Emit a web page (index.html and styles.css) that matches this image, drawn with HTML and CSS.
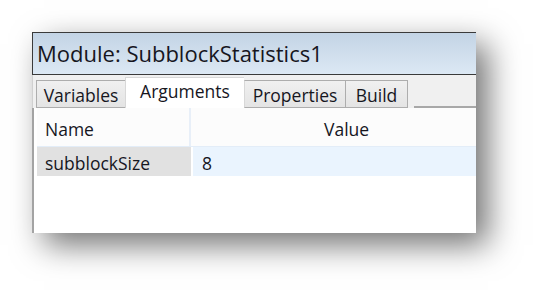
FILE: index.html
```html
<!DOCTYPE html>
<html lang="en">
<head>
    <meta charset="UTF-8">
    <title>Module</title>
    <link rel="stylesheet" href="styles.css">
</head>
<body>
    <div class="window">
        <div class="title">Module: SubblockStatistics1</div>
        <div class="tabs">
            <div class="tab t-vars">Variables</div>
            <div class="tab t-args active">Arguments</div>
            <div class="tab t-props">Properties</div>
            <div class="tab t-build">Build</div>
            <div class="tab-fill"></div>
        </div>
        <div class="grid">
            <div class="row head">
                <div class="cell name">Name</div>
                <div class="cell value">Value</div>
            </div>
            <div class="row data">
                <div class="cell name">subblockSize</div>
                <div class="cell value">8</div>
            </div>
        </div>
    </div>
</body>
</html>
```

FILE: styles.css
```css
*{
    margin: 0;
    padding: 0;
    box-sizing: border-box;
}
body{
    min-height: 298px;
    padding-top: 32px;
    background: #fff;
    font-family: "Open Sans", "Noto Sans", sans-serif;
    color: #16161e;
}
.window{
    width: 444px;
    height: 201px;
    margin-left: 32px;
    background: #f0f0f0;
    box-shadow: 12px 12px 30px rgba(0,0,0,0.55);
    display: flex;
    flex-direction: column;
    overflow: hidden;
}
.title{
    height: 43px;
    border: 1px solid #3a3a3a;
    border-right: none;
    background: linear-gradient(#c3d4e5, #dce8f4);
    font-size: 22px;
    line-height: 40px;
    padding-left: 4px;
}
.tabs{
    height: 33px;
    display: flex;
    align-items: flex-end;
    padding-left: 3px;
    border-left: 1px solid #d0d0d0;
}
.tab{
    height: 28px;
    border: 1px solid #adadad;
    border-right: none;
    background: linear-gradient(#f0f0f0, #e4e4e4);
    font-size: 17.5px;
    line-height: 29px;
    text-align: center;
}
.t-vars{
    width: 89px;
}
.t-args{
    width: 119px;
}
.t-props{
    width: 101px;
}
.t-build{
    width: 63px;
    border-right: 1px solid #adadad;
}
.tab.active{
    height: 31px;
    background: #fff;
    border-color: #d8d8d8;
    border-bottom: none;
    line-height: 27px;
}
.tab.active + .tab{
    border-left-color: #d8d8d8;
}
.tab-fill{
    flex: 1;
    margin-left: 6px;
    border-bottom: 2px solid #a8a8a8;
}
.grid{
    flex: 1;
    background: #fff;
    border-left: 2px solid #a3a3a3;
    padding-left: 3px;
}
.row{
    display: flex;
    font-size: 17.5px;
}
.cell.name{
    width: 154px;
    padding-left: 8px;
}
.cell.value{
    flex: 1;
    margin-left: 2px;
}
.head{
    height: 39px;
    line-height: 42px;
    border-bottom: 1px solid #e3edf8;
    background: #fcfcfc;
}
.head .cell.name{
    border-right: 2px solid #e8eff8;
}
.head .cell.value{
    margin-left: 0;
    padding-left: 133px;
}
.data{
    height: 29px;
    line-height: 32px;
}
.data .cell.name{
    background: #e1e1e1;
}
.data .cell.value{
    background: #eaf4fe;
    padding-left: 9px;
}
```
